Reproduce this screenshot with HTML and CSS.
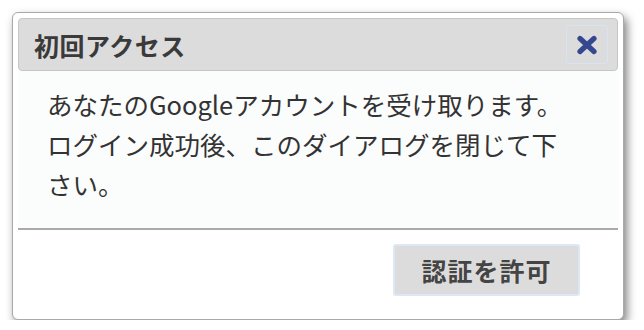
FILE: index.html
```html
<!DOCTYPE html>
<html lang="ja">
<head>
<meta charset="utf-8">
<link rel="stylesheet" href="styles.css">
</head>
<body>
<div class="dialog">
  <div class="titlebar">
    <span class="title">初回アクセス</span>
    <button class="close" aria-label="閉じる">
      <svg width="22" height="20" viewBox="0 0 22 20"><path d="M4 3.5 L18 16.5 M18 3.5 L4 16.5" stroke="#34478f" stroke-width="5.2" stroke-linecap="round"/></svg>
    </button>
  </div>
  <div class="content">
    <p class="message">あなたのGoogleアカウントを受け取ります。ログイン成功後、このダイアログを閉じて下さい。</p>
  </div>
  <div class="buttons">
    <button class="allow">認証を許可</button>
  </div>
</div>
</body>
</html>
```
FILE: styles.css
```css
html, body {
  margin: 0;
  padding: 0;
  background: #ffffff;
}
body {
  padding: 12px 0 0 12px;
  font-family: "Noto Sans CJK JP", "Noto Sans", sans-serif;
  color: #333;
}
.dialog {
  width: 600px;
  height: 296px;
  border: 1px solid #a9a9a9;
  border-radius: 6px;
  background: #fff;
  box-shadow: 3px 5px 10px rgba(0, 0, 0, 0.5);
  padding: 5px;
  display: flex;
  flex-direction: column;
}
.titlebar {
  height: 51px;
  flex: none;
  border: 1px solid #c6c6c6;
  border-radius: 4px;
  background: #dcdcdc;
  display: flex;
  align-items: center;
  justify-content: space-between;
  padding: 0 9px 0 15px;
}
.title {
  font-weight: bold;
  font-size: 25px;
  color: #3a3a3a;
  letter-spacing: 0.5px;
}
.close {
  width: 42px;
  height: 39px;
  border: 1px solid #d6e4f6;
  border-radius: 3px;
  background: #dcdcdc;
  display: flex;
  align-items: center;
  justify-content: center;
  padding: 0;
}
.content {
  flex: none;
  background: #fbfcfc;
  padding: 13px 51px 0 29px;
  height: 144px;
  border-bottom: 2px solid #aaaaaa;
}
.message {
  margin: 0;
  font-size: 25.5px;
  line-height: 40px;
  color: #333;
}
.buttons {
  flex: 1;
  display: flex;
  justify-content: flex-end;
  align-items: flex-start;
  padding: 14px 38px 0 0;
}
.allow {
  width: 187px;
  height: 52px;
  border: 2px solid #dce8f6;
  border-radius: 3px;
  background: #dcdcdc;
  font-family: "Noto Sans CJK JP", "Noto Sans", sans-serif;
  font-weight: bold;
  font-size: 25px;
  color: #444;
  letter-spacing: 1px;
}
```
